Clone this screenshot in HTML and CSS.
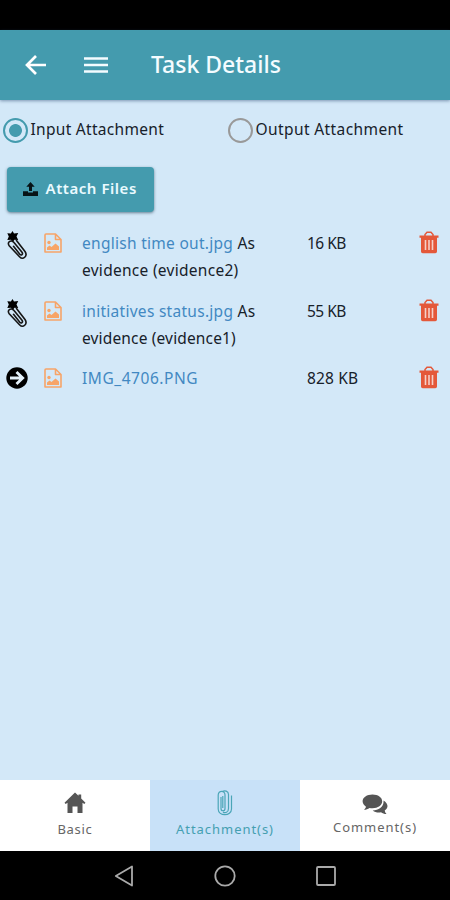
FILE: index.html
```html
<!DOCTYPE html>
<html lang="en">
<head>
<meta charset="utf-8">
<title>Task Details</title>
<link rel="stylesheet" href="styles.css">
</head>
<body>
<svg class="defs" width="0" height="0">
  <symbol id="clip-new" viewBox="0 0 20 30">
    <path d="M5.500 0l1.500 2.500 4.200-.4-1.700 3.400 1.700 3.500-3.800-.3L5.500 11.500 4 8.700.3 9l1.500-3.400L.3 2.300l3.600.2z" fill="#000"/>
    <path d="M9.500 9.500l8.500 11c3 4.500-1.900 9-5.500 5.200L2.200 14.800c-1.400-2-.9-4 .8-4.600s3-.1 4 1.300l8 9.800c1.400 2-.7 3.600-2.200 1.900L6.500 15.300" fill="none" stroke="#151515" stroke-width="1.600" stroke-linecap="round"/>
  </symbol>
  <symbol id="picture" viewBox="0 0 18 20">
    <path d="M2 1h9.500L17 6.500V19H1V2q0-1 1-1zM11.500 1v5.500H17" fill="none" stroke="#f7a468" stroke-width="1.600" stroke-linejoin="round"/>
    <circle cx="5" cy="9.500" r="1.700" fill="#f7a468"/>
    <path d="M3 17v-2.500L5.500 12.500 7.500 14 11.500 10.500 15 13.500V17z" fill="#f7a468"/>
  </symbol>
  <symbol id="trash" viewBox="0 0 20 23">
    <path d="M6 5V3.500L8 1.300h4l2 2.200V5" fill="none" stroke="#e4583a" stroke-width="1.500"/>
    <path d="M.5 4.500h19v2.200h-1.500V20.500q0 1.700-1.700 1.700h-12.600Q2 22.200 2 20.500V6.700H.5z" fill="#e4583a"/>
    <path d="M6.500 9v10M10 9v10M13.500 9v10" stroke="#f6cfc8" stroke-width="1.600"/>
  </symbol>
</svg>
<div class="status"></div>
<header class="bar">
  <svg class="back" width="22" height="22" viewBox="0 0 22 22"><path d="M21 11H2.500M11 2L2 11l9 9" fill="none" stroke="#fff" stroke-width="2.700"/></svg>
  <svg class="menu" width="24" height="18" viewBox="0 0 24 18"><path d="M0 2.500h24M0 9h24M0 15.500h24" stroke="#f4fcff" stroke-width="2.500"/></svg>
  <h1 class="title">Task Details</h1>
</header>
<main class="content">
  <div class="options">
    <label class="option"><span class="radio checked"></span><span class="input-label">Input Attachment</span></label>
    <label class="option"><span class="radio"></span><span class="output-label">Output Attachment</span></label>
  </div>
  <button class="attach">
    <svg width="15" height="14" viewBox="0 0 15 14"><path d="M7.500 0l4.200 4.700H9V9H6V4.700H3.300zM0 9.200h5V10.500h5V9.200h5V14H0z" fill="#071316"/></svg>
    <span>Attach Files</span>
  </button>
  <div class="files">
    <div class="file">
      <svg class="kind" width="20" height="30"><use href="#clip-new"/></svg>
      <svg class="picture" width="18" height="20"><use href="#picture"/></svg>
      <div class="name"><span><a>english time out.jpg</a> As</span><br><span>evidence (evidence2)</span></div>
      <div class="size short">16 KB</div>
      <svg class="trash" width="20" height="23"><use href="#trash"/></svg>
    </div>
    <div class="file">
      <svg class="kind" width="20" height="30"><use href="#clip-new"/></svg>
      <svg class="picture" width="18" height="20"><use href="#picture"/></svg>
      <div class="name"><span><a>initiatives status.jpg</a> As</span><br><span class="tight">evidence (evidence1)</span></div>
      <div class="size short">55 KB</div>
      <svg class="trash" width="20" height="23"><use href="#trash"/></svg>
    </div>
    <div class="file">
      <svg class="kind arrow" width="22" height="22" viewBox="0 0 22 22"><circle cx="11" cy="11" r="10.700" fill="#000"/><path d="M4 11h12.500M10.500 5l6.200 6-6.200 6" fill="none" stroke="#e4f1fa" stroke-width="2.800"/></svg>
      <svg class="picture" width="18" height="20"><use href="#picture"/></svg>
      <div class="name"><span class="wide"><a>IMG_4706.PNG</a></span></div>
      <div class="size">828 KB</div>
      <svg class="trash" width="20" height="23"><use href="#trash"/></svg>
    </div>
  </div>
</main>
<nav class="tabs">
  <div class="tab basic">
    <svg width="22" height="22" viewBox="0 0 22 22"><path d="M11 .5l3.500 3.300V2.500h2.700v3.900L21.500 10.700 20.300 12 18.500 10.800V21H13.500V14.500h-5V21H3.500V10.800L1.700 12 .5 10.700z" fill="#555"/></svg>
    <span>Basic</span>
  </div>
  <div class="tab active">
    <svg class="clip" width="16" height="26" viewBox="0 0 16 26"><path d="M4 7v11.500c0 3 4 3 4 0V5C8 .2 1.200.2 1.200 5v14c0 7.500 13.300 7.500 13.300 0V5.500M11.500 6v12.500c0 4-3.500 5-5.500 3.500M5.800 6v12M11.500 6V4.500c0-3.500-4-4.500-6-3" fill="none" stroke="#4aa5b7" stroke-width="1.200"/></svg>
    <span>Attachment(s)</span>
  </div>
  <div class="tab comments">
    <svg width="26" height="21" viewBox="0 0 26 21"><path d="M10.500.5c5.500 0 9.700 2.900 9.700 6.800s-4.200 7-9.700 7c-1 0-2-.1-3-.4-1.500 1.100-3.500 1.800-5.500 1.800 1.100-.9 1.800-1.800 2-3C2 11.500.6 9.500.6 7.300.6 3.400 5 .5 10.500.5z" fill="#555"/><path d="M21.500 6.500c5 3 5.200 7.500 1.200 10 .2 1.400.8 2.500 1.800 3.500-2.200 0-4-.7-5.500-1.800-3 .6-6 0-8.300-1.800 6.200 0 11.500-4 10.800-9.900z" fill="#555"/></svg>
    <span>Comment(s)</span>
  </div>
</nav>
<footer class="system">
  <svg width="20" height="22" viewBox="0 0 20 22"><path d="M18 1.500v19L1.800 11z" fill="none" stroke="#aaa" stroke-width="1.800" stroke-linejoin="round"/></svg>
  <svg width="22" height="22" viewBox="0 0 22 22"><circle cx="11" cy="11" r="9.700" fill="none" stroke="#aaa" stroke-width="1.800"/></svg>
  <svg width="20" height="20" viewBox="0 0 20 20"><rect x="1" y="1" width="18" height="18" rx="1" fill="none" stroke="#aaa" stroke-width="1.800"/></svg>
</footer>
</body>
</html>
```
FILE: styles.css
```css
* { box-sizing: border-box; }
body {
  margin: 0;
  height: 900px;
  display: flex;
  flex-direction: column;
  overflow: hidden;
  background: #d3e8f8;
  color: #17212a;
  font-family: "Noto Sans", "Open Sans", sans-serif;
  font-size: 15.500px;
}
svg { display: block; flex: none; }
.defs { display: none; }
span { white-space: nowrap; }
.status { height: 30px; background: #000; flex: none; }
.bar {
  height: 70px;
  flex: none;
  display: flex;
  align-items: center;
  padding-left: 25px;
  background: #449bae;
  box-shadow: 0 1px 3px rgba(40, 70, 110, .5);
}
.menu { margin-left: 37px; }
.title {
  margin: -3px 0 0 43px;
  font-size: 23px;
  font-weight: 500;
  line-height: 32px;
  color: #f4fcff;
}
.content { flex: 1; }
.options { display: grid; grid-template-columns: 225px 225px; padding-top: 17px; }
.option { display: flex; align-items: center; height: 26px; padding-left: 3px; line-height: 22px; }
.option span:last-child { margin: -2px 0 0 2.500px; }
.input-label { letter-spacing: .3px; }
.output-label { letter-spacing: .4px; }
.radio { width: 25px; height: 25px; flex: none; border: 2px solid #999; border-radius: 50%; }
.checked { border-color: #449bae; background: radial-gradient(circle, #449bae 6px, transparent 6.800px); }
.attach {
  display: flex;
  align-items: center;
  width: 147px;
  height: 45px;
  margin: 24px 0 0 7px;
  padding: 0 0 2px 16px;
  border: 0;
  border-radius: 4px;
  background: #449bae;
  box-shadow: 0 1px 3px rgba(30, 60, 80, .6);
  color: #eafaff;
  font: 600 15px/20px "Noto Sans", sans-serif;
  letter-spacing: .55px;
}
.attach span { margin: -2px 0 0 7.500px; }
.files { padding-top: 17px; }
.file {
  display: grid;
  grid-template-columns: 44px 38px 225px 112px 20px;
  align-items: start;
  margin-bottom: 12.500px;
  line-height: 27px;
}
.kind { margin: 2px 0 0 7px; }
.arrow { margin: 3px 0 0 6px; }
.picture { margin-top: 4px; }
.trash { margin-top: 2px; }
.name, .size { padding-top: 1px; }
.name { letter-spacing: .28px; }
.tight { letter-spacing: .15px; }
.wide { letter-spacing: .55px; }
.size { letter-spacing: .15px; }
.short { letter-spacing: -.5px; }
.file a { color: #4288c2; }
.tabs { display: grid; grid-template-columns: 150px 150px 150px; height: 71px; flex: none; background: #fff; }
.tab {
  display: flex;
  flex-direction: column;
  align-items: center;
  padding-top: 12px;
  color: #666;
  font-size: 13px;
  line-height: 18px;
  letter-spacing: .95px;
}
.tab span { margin-top: 6px; }
.basic { letter-spacing: .7px; }
.active { background: #c8e1f8; color: #459fb1; padding-top: 10px; }
.active .clip { margin-bottom: -2px; }
.comments { padding-top: 14px; }
.comments span { margin-top: 3px; }
.system {
  height: 49px;
  flex: none;
  display: flex;
  justify-content: center;
  align-items: center;
  gap: 80px;
  background: #000;
}
```
